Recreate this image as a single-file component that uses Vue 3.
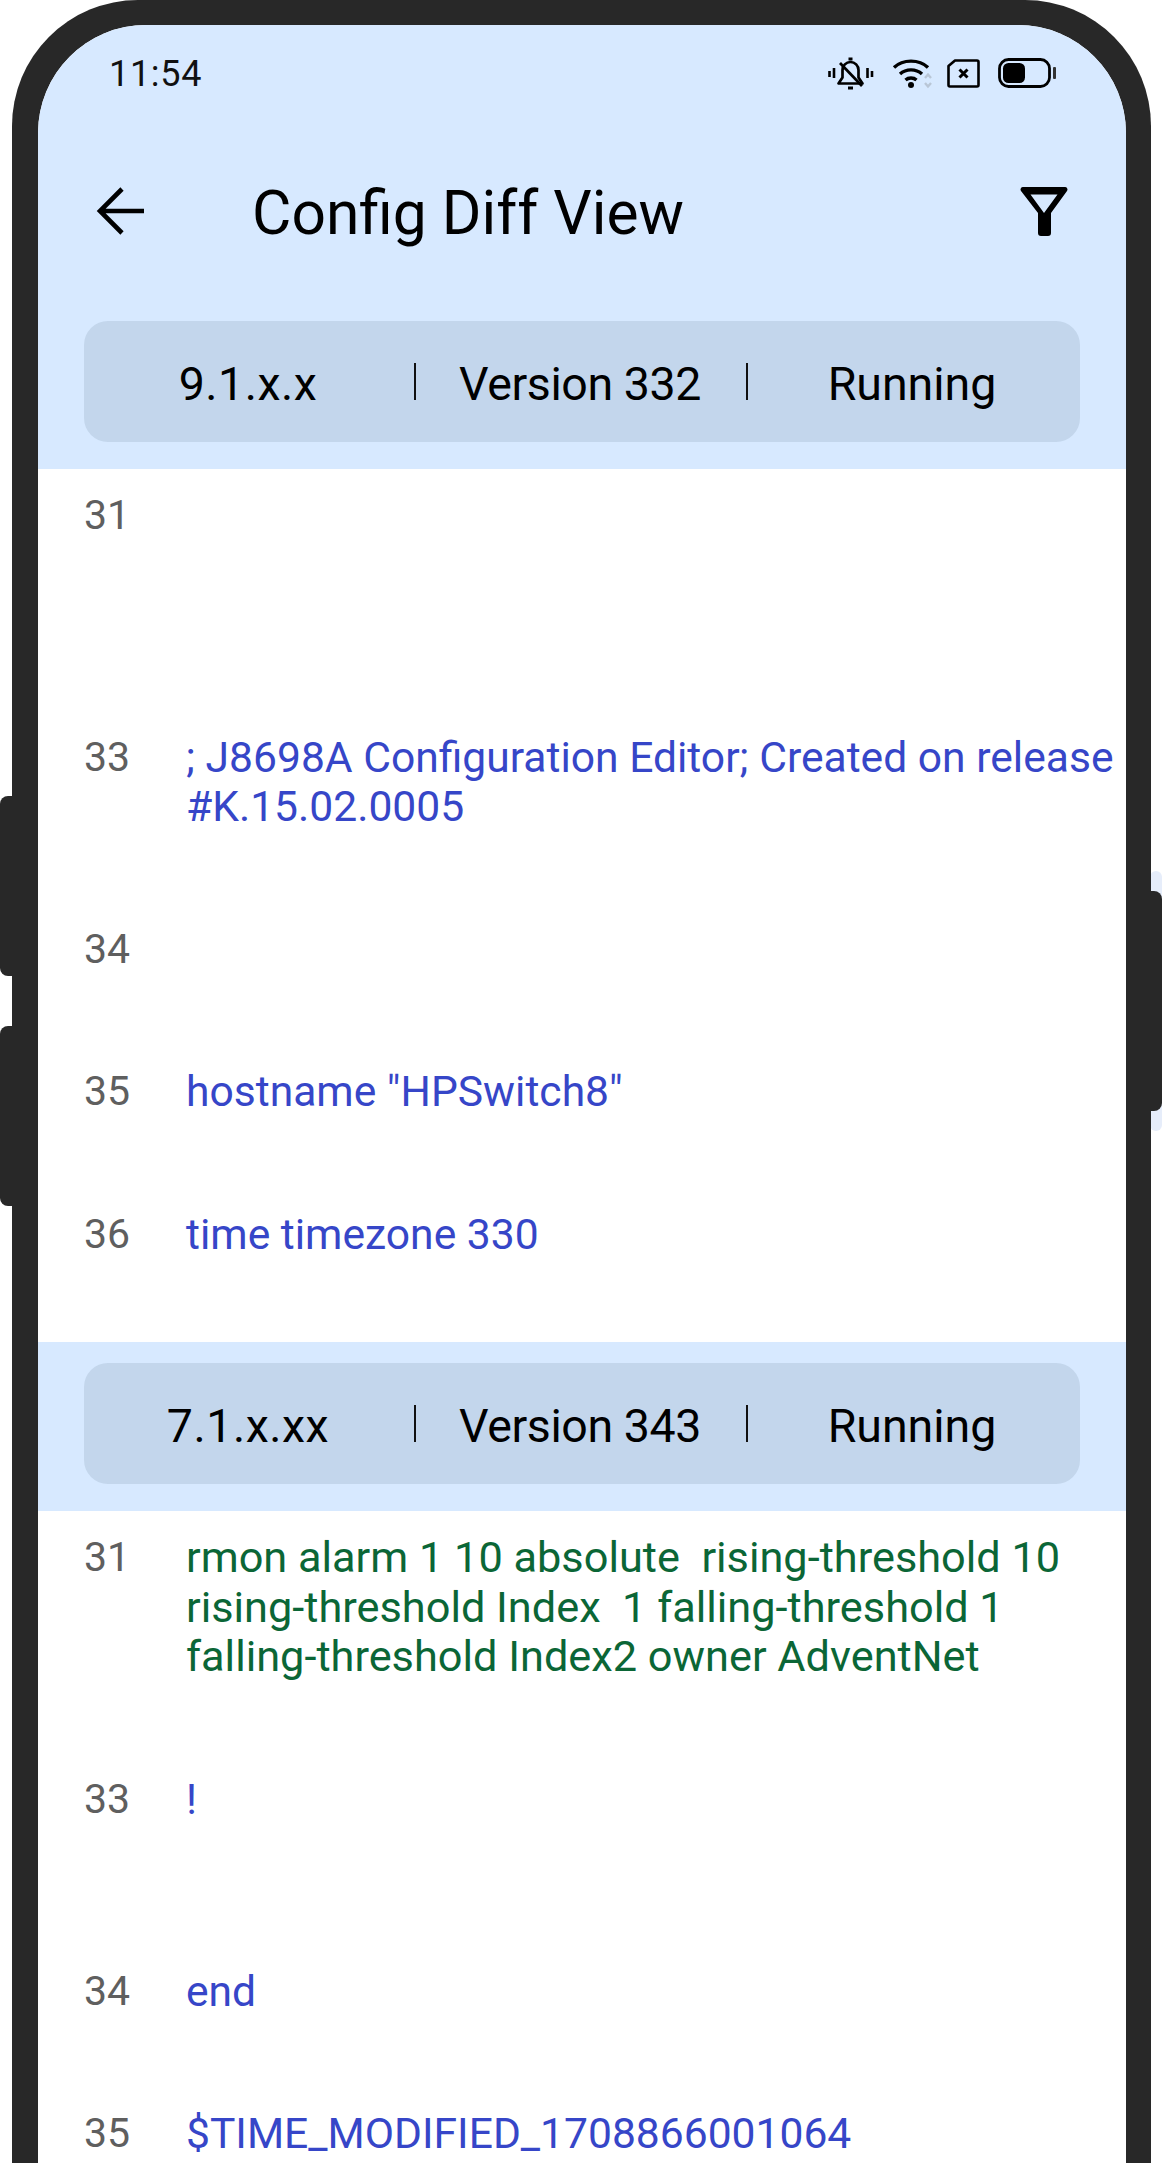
<script setup>
const first = [
  { n: 31, text: '', tall: true },
  { n: 33, text: '; J8698A Configuration Editor; Created on release #K.15.02.0005' },
  { n: 34, text: '' },
  { n: 35, text: 'hostname "HPSwitch8"' },
  { n: 36, text: 'time timezone 330' }
]
const second = [
  { n: 31, text: 'rmon alarm 1 10 absolute  rising-threshold 10 rising-threshold Index  1 falling-threshold 1 falling-threshold Index2 owner AdventNet', green: true },
  { n: 33, text: '!', tall2: true },
  { n: 34, text: 'end' },
  { n: 35, text: '$TIME_MODIFIED_1708866001064' }
]
</script>

<template>
  <div class="page">
    <div class="glow" aria-hidden="true"></div>
    <div class="key key-a" aria-hidden="true"></div>
    <div class="key key-b" aria-hidden="true"></div>
    <div class="key key-c" aria-hidden="true"></div>
    <div class="phone">
      <div class="screen">
        <header class="top">
          <div class="status">
            <span class="time">11:54</span>
            <div class="status-icons">
              <svg class="i-bell" width="46" height="33" viewBox="0 0 46 33" fill="none" stroke="#000">
                <path d="M1.500 14v6M6 11v10M39.500 11v10M44 14v6" stroke-width="2.600" />
                <path d="M10.500 26.500h24l-4-6V13a8 8 0 0 0-16 0v7.500z" stroke-width="2.700" stroke-linejoin="round" />
                <path d="M20.500 2h4" stroke-width="2.800" />
                <path d="M12 6l22 23" stroke-width="2.700" />
                <path d="M20 31h5" stroke-width="3" />
              </svg>
              <svg class="i-wifi" width="42" height="31" viewBox="0 0 42 31" fill="none" stroke="#000">
                <path d="M2 9.500C11 1 27 1 36 9.500" stroke-width="3.400" />
                <path d="M8 16c6-5.500 16-5.500 22 0" stroke-width="3.400" />
                <path d="M13.500 22c3-2.600 8-2.600 11 0" stroke-width="3.400" />
                <circle cx="19" cy="27" r="3" fill="#000" stroke="none" />
                <path d="M33 20l3-3.500 3 3.500M33 25l3 3.500 3-3.500" stroke="#b9c6d6" stroke-width="2.400" />
              </svg>
              <svg class="i-sim" width="33" height="29" viewBox="0 0 33 29" fill="none" stroke="#000">
                <path d="M8 1.500H30a1.500 1.500 0 0 1 1.500 1.500V26a1.500 1.500 0 0 1-1.500 1.500H3A1.500 1.500 0 0 1 1.500 26V7z" stroke-width="2.600" stroke-linejoin="round" />
                <path d="M12.500 10.500l8 8M20.500 10.500l-8 8" stroke-width="3" />
              </svg>
              <svg class="i-bat" width="58" height="30" viewBox="0 0 58 30" fill="none">
                <rect x="1.500" y="1.500" width="50" height="27" rx="9" stroke="#000" stroke-width="2.800" />
                <rect x="5" y="5" width="22" height="20" rx="5.500" fill="#000" />
                <rect x="55" y="9" width="3" height="12" rx="1" fill="#333" />
              </svg>
            </div>
          </div>
          <div class="toolbar">
            <svg class="i-back" width="48" height="48" viewBox="0 0 48 48" fill="none" stroke="#000" stroke-width="4.600">
              <path d="M48 24H4M26 2L4 24l22 22" />
            </svg>
            <h1 class="title">Config Diff View</h1>
            <svg class="i-filter" width="48" height="49" viewBox="0 0 48 49" fill="#000">
              <path fill-rule="evenodd" d="M3 0H45a2.500 2.500 0 0 1 2 4L31 26V46a3 3 0 0 1-3 3H21a3 3 0 0 1-3-3V26L1 4A2.500 2.500 0 0 1 3 0ZM10.500 7.500L24 26 37.500 7.500Z" />
            </svg>
          </div>
          <div class="pill">
            <span class="cell">9.1.x.x</span>
            <span class="cell">Version 332</span>
            <span class="cell">Running</span>
          </div>
        </header>

        <section class="rows">
          <div v-for="r in first" :key="r.n" class="row" :class="{ tall: r.tall }">
            <span class="num">{{ r.n }}</span>
            <span class="txt">{{ r.text }}</span>
          </div>
        </section>

        <div class="band">
          <div class="pill">
            <span class="cell">7.1.x.xx</span>
            <span class="cell">Version 343</span>
            <span class="cell">Running</span>
          </div>
        </div>

        <section class="rows">
          <div v-for="r in second" :key="r.n" class="row" :class="{ green: r.green, two: r.tall2 }">
            <span class="num">{{ r.n }}</span>
            <span class="txt">{{ r.text }}</span>
          </div>
        </section>
      </div>
    </div>
  </div>
</template>

<style scoped>
.page {
  position: relative;
  width: 1162px;
  height: 2163px;
  overflow: hidden;
  background: #fff;
  font-family: Roboto, "Liberation Sans", sans-serif;
  color: #000;
}
.glow {
  position: absolute;
  left: 1150px;
  top: 871px;
  width: 12px;
  height: 260px;
  border-radius: 8px;
  background: #e6edfa;
}
.key {
  position: absolute;
  background: #282828;
}
.key-a,
.key-b {
  left: 0;
  width: 20px;
  height: 180px;
  border-radius: 8px 0 0 8px;
}
.key-a { top: 796px; }
.key-b { top: 1026px; }
.key-c {
  left: 1140px;
  top: 891px;
  width: 22px;
  height: 220px;
  border-radius: 0 8px 8px 0;
}
.phone {
  position: relative;
  box-sizing: border-box;
  margin-left: 12px;
  width: 1139px;
  height: 2300px;
  padding: 25px 25px 0 26px;
  background: #282828;
  border-radius: 126px 126px 0 0;
}
.screen {
  height: 100%;
  background: #fff;
  border-radius: 108px 108px 0 0;
  overflow: hidden;
}
.top {
  background: #d7e9ff;
  padding-bottom: 27px;
}
.status {
  box-sizing: border-box;
  height: 96px;
  display: flex;
  align-items: center;
  justify-content: space-between;
  padding: 2px 70px 0 71px;
}
.time {
  font-size: 36px;
  letter-spacing: 0.7px;
  color: #111;
}
.status-icons {
  display: flex;
  align-items: center;
  margin-top: -2px;
}
.i-wifi { margin-left: 18px; }
.i-sim { margin-left: 13px; }
.i-bat { margin-left: 18px; }
.toolbar {
  height: 180px;
  display: flex;
  align-items: center;
  padding: 0 58px;
}
.title {
  margin: 5px 0 0 108px;
  flex: 1;
  font-size: 60.500px;
  font-weight: 400;
  line-height: 70px;
}
.pill {
  margin: 20px 46px 0;
  height: 121px;
  display: grid;
  grid-template-columns: repeat(3, 1fr);
  align-items: center;
  background: #c3d6ec;
  border-radius: 24px;
}
.band .pill { margin-top: 0; }
.cell {
  position: relative;
  padding: 4px 4px 0 0;
  text-align: center;
  font-size: 46.500px;
  line-height: 52px;
}
.cell:first-child { letter-spacing: 0.5px; }
.cell:nth-child(2) { letter-spacing: -0.4px; }
.cell:not(:last-child)::after {
  content: "";
  position: absolute;
  right: 0;
  top: 9px;
  height: 37px;
  width: 2px;
  background: #111;
}
.rows {
  display: block;
}
.row {
  box-sizing: border-box;
  display: grid;
  grid-template-columns: 102px 1fr;
  padding: 22px 0 71px 46px;
  font-size: 42.600px;
  line-height: 49.500px;
  min-height: 142.500px;
}
.row.tall { min-height: 241.500px; }
.row.two { min-height: 192px; }
.num {
  color: #5f5f5f;
  font-size: 41px;
}
.txt {
  color: #3646c8;
  white-space: pre-wrap;
}
.green .txt {
  color: #0b6636;
  font-size: 43.300px;
}
.band {
  margin-top: 12px;
  padding: 21px 0 27px;
  background: #d7e9ff;
}
</style>
